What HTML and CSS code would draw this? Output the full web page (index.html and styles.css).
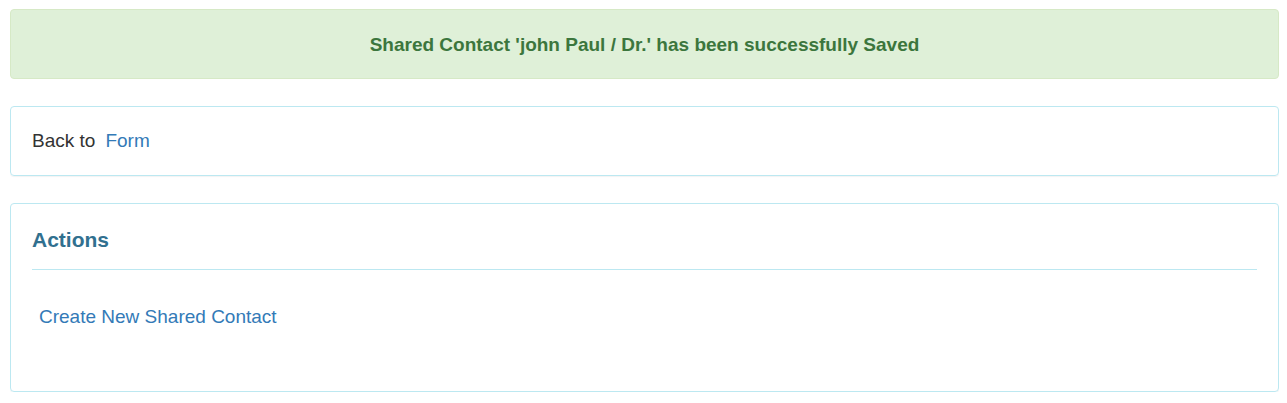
FILE: index.html
```html
<!DOCTYPE html>
<html lang="en">
<head>
    <meta charset="UTF-8">
    <title>Shared Contact Saved</title>
    <link rel="stylesheet" href="styles.css">
</head>
<body>
    <div class="alert">Shared Contact 'john Paul / Dr.' has been successfully Saved</div>

    <div class="panel back">
        Back to <a href="#">Form</a>
    </div>

    <div class="panel actions">
        <h3>Actions</h3>
        <a class="action-link" href="#">Create New Shared Contact</a>
    </div>
</body>
</html>
```

FILE: styles.css
```css
body {
    margin: 9px 8px 0 10px;
    font-family: "Liberation Sans", Arial, sans-serif;
    color: #333;
    background-color: #fff;
}
a {
    color: #337ab7;
    text-decoration: none;
}
.alert {
    height: 68px;
    padding-top: 1px;
    box-sizing: border-box;
    height: 70px;
    display: flex;
    align-items: center;
    justify-content: center;
    background-color: #dff0d8;
    border: 1px solid #d6e9c6;
    border-radius: 4px;
    color: #3c763d;
    font-weight: bold;
    font-size: 19px;
}
.panel {
    margin-top: 27px;
    border: 1px solid #bce8f1;
    border-radius: 4px;
    box-shadow: 0 1px 1px rgba(0, 0, 0, 0.05);
    padding: 0 21px;
}
.back {
    height: 68px;
    display: flex;
    align-items: center;
    font-size: 19px;
}
.back a {
    margin-left: 10px;
}
.actions {
    height: 187px;
}
.actions h3 {
    margin: 0;
    padding: 24px 0 17px;
    font-size: 21px;
    color: #31708f;
    border-bottom: 1px solid #bce8f1;
}
.action-link {
    display: inline-block;
    margin: 36px 0 0 7px;
    font-size: 19px;
}
```
